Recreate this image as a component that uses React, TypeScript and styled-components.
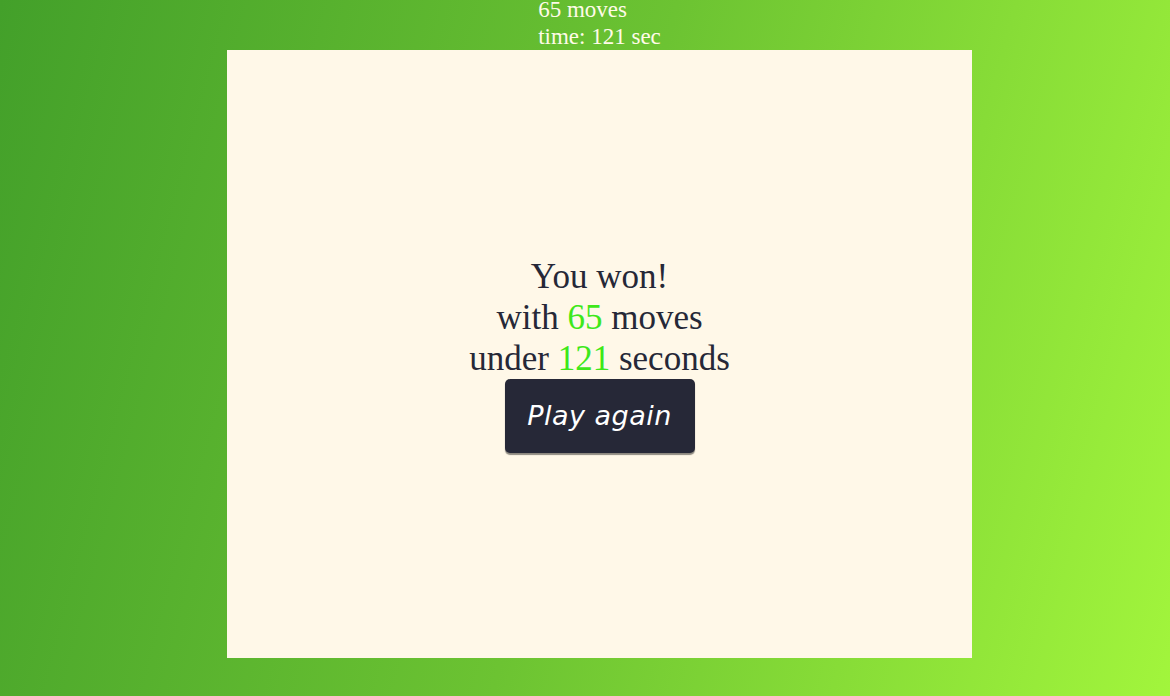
import styled, { createGlobalStyle } from "styled-components";

const GlobalStyle = createGlobalStyle`
  html, body {
    margin: 0;
    padding: 0;
  }
  body {
    min-height: 100vh;
    background: linear-gradient(105deg, #43a02a 0%, #6cc332 50%, #a2f53c 100%);
    font-family: "Liberation Serif", "Times New Roman", serif;
    overflow: hidden;
  }
`;

const Page = styled.div`
  display: flex;
  flex-direction: column;
  align-items: center;
  height: 696px;
  padding-left: 29px;
  box-sizing: border-box;
`;

const Stats = styled.div`
  margin-top: -4px;
  color: #fffbe8;
  font-size: 23px;
  line-height: 27px;
`;

const Board = styled.div`
  width: 745px;
  height: 608px;
  background: #fff8e8;
  display: flex;
  flex-direction: column;
  align-items: center;
  justify-content: center;
`;

const Message = styled.div`
  color: #262837;
  font-size: 35px;
  line-height: 41px;
  text-align: center;
`;

const Highlight = styled.span`
  color: #3ee81a;
`;

const PlayButton = styled.button`
  width: 190px;
  height: 74px;
  margin-top: 0;
  border: none;
  border-radius: 5px;
  background: #262837;
  color: #ffffff;
  font-family: "DejaVu Sans", sans-serif;
  font-style: italic;
  font-size: 27px;
  letter-spacing: 0.5px;
  box-shadow: 0 2px 1px rgba(0, 0, 0, 0.45);
  cursor: pointer;
`;

export default function App() {
  const moves = 65;
  const seconds = 121;
  return (
    <>
      <GlobalStyle />
      <Page>
        <Stats>
          <div>{moves} moves</div>
          <div>time: {seconds} sec</div>
        </Stats>
        <Board>
          <Message>
            <div>You won!</div>
            <div>
              with <Highlight>{moves}</Highlight> moves
            </div>
            <div>
              under <Highlight>{seconds}</Highlight> seconds
            </div>
          </Message>
          <PlayButton>Play again</PlayButton>
        </Board>
      </Page>
    </>
  );
}
